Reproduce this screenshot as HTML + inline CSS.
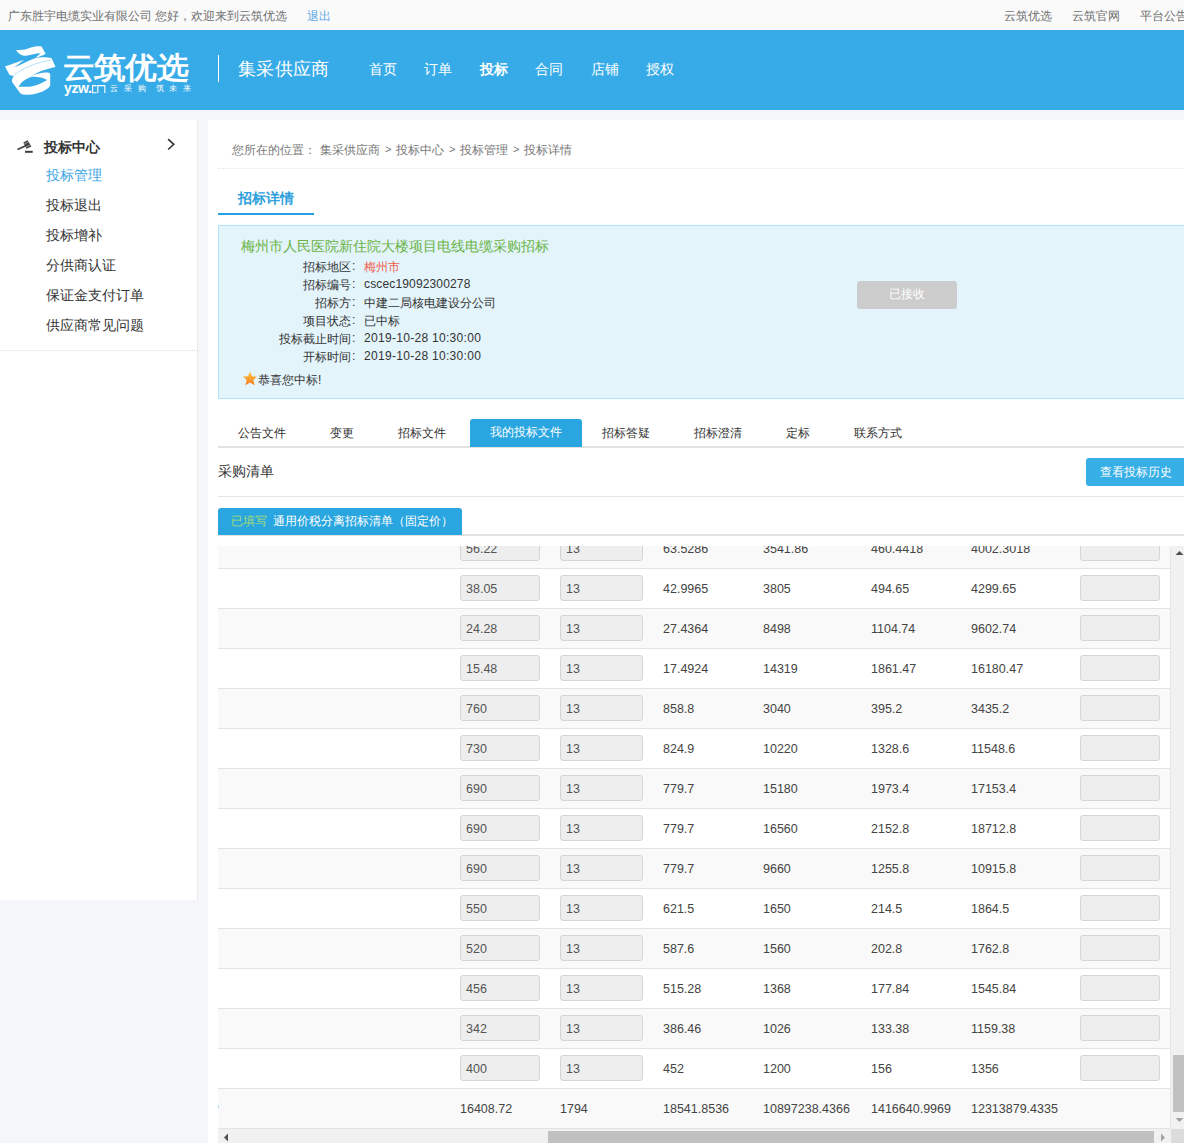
<!DOCTYPE html>
<html><head><meta charset="utf-8">
<style>
*{box-sizing:border-box;margin:0;padding:0}
html,body{width:1184px;height:1143px;overflow:hidden}
body{background:#f4f6fa;font-family:"Liberation Sans",sans-serif;color:#333;position:relative}
.abs{position:absolute;white-space:nowrap}
#top{position:absolute;left:0;top:0;width:1184px;height:30px;background:#fafafa;font-size:12px;color:#707070}
#hdr{position:absolute;left:0;top:30px;width:1184px;height:80px;background:#37abe8;color:#fff}
#side{position:absolute;left:0;top:120px;width:198px;height:780px;background:#fff;border-right:1px solid #ececec}
#main{position:absolute;left:208px;top:120px;width:1000px;height:1100px;background:#fff}
.nav{font-size:14px;color:#fff;top:31px}
.si{font-size:14px;color:#333;left:46px}
.lbl{font-size:12px;color:#333;text-align:right;width:132px;left:0}
.val{font-size:12px;color:#333;left:145px}
.bc{font-size:12px;color:#777;top:22px}
.gt{font-size:11px;top:23px}
.tab{font-size:12px;color:#333;top:16px}
.row{position:absolute;left:0;width:952px;height:40px;border-top:1px solid #e3e3e3}
.g{background:#f9f9f9}
.inp{position:absolute;top:6px;height:26px;background:#eee;border:1px solid #d5d5d5;border-radius:3px;font-size:12.5px;color:#555;padding-left:5px;line-height:26px}
.c{position:absolute;top:1px;line-height:39px;font-size:12.5px;color:#444}
</style></head><body>

<div id="top">
  <div class="abs" style="left:8px;top:8px">广东胜宇电缆实业有限公司 您好，欢迎来到云筑优选</div>
  <div class="abs" style="left:307px;top:8px;color:#5aa8e6">退出</div>
  <div class="abs" style="left:1004px;top:8px">云筑优选</div>
  <div class="abs" style="left:1072px;top:8px">云筑官网</div>
  <div class="abs" style="left:1140px;top:8px">平台公告</div>
</div>

<div id="hdr">
  <svg class="abs" style="left:2px;top:12px" width="58" height="58" viewBox="0 0 58 58">
    <path fill="#fff" d="M14,7.9 C20,8.5 24,7.5 28,5.8 C32,4.4 36,3.6 39.6,4.6 L43.6,11.7 C41,13.5 37,14.8 33.5,15.8 L38.6,11.2 C34,11 30,13 24,13.7 C19,13.8 16,11 14,7.9Z"/>
    <path fill="#fff" fill-rule="evenodd" d="M3,24.4 L22.3,17.8 L12.2,25.6 C19,22.6 26,18.6 33.5,15.9 C40,14.8 46,15.5 49.7,16.2 L53.5,24.9 C44,27 35,29.5 28.9,35 C33,32 38,30.4 45.7,30.4 C47.5,30.5 48.2,31.5 48.2,33 L48.2,43.6 C46,48 36,52.5 26.4,52.8 C22,52.8 19.5,52.3 18.3,51.3 L10.1,40 C9.8,38 10.5,35.5 11.7,34 L7.6,33 Z M16.7,44.7 C19,40 23.5,37 28.9,35 C35,34.3 40,35.5 45.2,38 C40,41 34,44 27.9,44.7 Z"/>
    <path d="M12.2,33.5 C20,26 33,21 49.7,17.8" stroke="#37abe8" stroke-width="0.5" fill="none" opacity="0.7"/>
  </svg>
  <div class="abs" style="left:63px;top:17px;font-size:32px;font-weight:bold;letter-spacing:-0.8px;transform:scaleY(0.94);transform-origin:0 22px">云筑优选</div>
  <div class="abs" style="left:64px;top:50px;font-size:14px;line-height:16px;font-weight:bold;letter-spacing:-0.4px">yzw.</div>
  <svg class="abs" style="left:91px;top:54px" width="16" height="10" viewBox="0 0 16 10"><path d="M5.6 1.6 H1.6 V8.8 H5.6 M6.8 9 V1.6 H13.8 V9" fill="none" stroke="#fff" stroke-width="1.1"/></svg>
  <div class="abs" style="left:110px;top:53px;font-size:8px;letter-spacing:5.9px">云采购</div>
  <div class="abs" style="left:155.5px;top:53px;font-size:8px;letter-spacing:5.9px">筑未来</div>
  <div class="abs" style="left:218px;top:25px;width:1px;height:27px;background:#fff"></div>
  <div class="abs" style="left:238px;top:27px;font-size:18px;letter-spacing:0.3px">集采供应商</div>
  <div class="abs nav" style="left:369px">首页</div>
  <div class="abs nav" style="left:424px">订单</div>
  <div class="abs nav" style="left:480px;font-weight:bold">投标</div>
  <div class="abs nav" style="left:535px">合同</div>
  <div class="abs nav" style="left:591px">店铺</div>
  <div class="abs nav" style="left:646px">授权</div>
</div>

<div id="side">
  <svg class="abs" style="left:14px;top:16px" width="24" height="20" viewBox="0 0 24 20">
    <path d="M4.1 13.2 L11.6 9.8" stroke="#404040" stroke-width="1.7" stroke-linecap="round"/>
    <path d="M9.3 6.4 L13.6 4.2 L17.4 10.4 L12.5 12.8Z" fill="#404040"/>
    <path d="M10.3 8 L14.7 5.7 M11.9 11.1 L16.4 8.8" stroke="#fff" stroke-width="0.6" opacity="0.8"/>
    <rect x="11" y="14.8" width="7.7" height="2" fill="#404040"/>
  </svg>
  <div class="abs" style="left:44px;top:19px;font-size:14px;font-weight:bold;color:#333">投标中心</div>
  <svg class="abs" style="left:166px;top:18px" width="10" height="14" viewBox="0 0 10 14"><path d="M2.1 1.1 L7.8 6.3 L2.1 11.5" fill="none" stroke="#333" stroke-width="1.6"/></svg>
  <div class="abs si" style="top:47px;color:#3aa5e4">投标管理</div>
  <div class="abs si" style="top:77px">投标退出</div>
  <div class="abs si" style="top:107px">投标增补</div>
  <div class="abs si" style="top:137px">分供商认证</div>
  <div class="abs si" style="top:167px">保证金支付订单</div>
  <div class="abs si" style="top:197px">供应商常见问题</div>
  <div class="abs" style="left:0;top:230px;width:197px;border-top:1px dotted #ddd"></div>
</div>

<div id="main">
  <div class="abs bc" style="left:24px">您所在的位置：</div>
  <div class="abs bc" style="left:112px">集采供应商</div>
  <div class="abs bc gt" style="left:177px">&gt;</div>
  <div class="abs bc" style="left:188px">投标中心</div>
  <div class="abs bc gt" style="left:241px">&gt;</div>
  <div class="abs bc" style="left:252px">投标管理</div>
  <div class="abs bc gt" style="left:305px">&gt;</div>
  <div class="abs bc" style="left:316px">投标详情</div>
  <div class="abs" style="left:10px;top:48px;width:990px;border-top:1px dotted #e6e6e6"></div>
  <div class="abs" style="left:30px;top:70px;font-size:14px;font-weight:bold;color:#2f9fdc">招标详情</div>
  <div class="abs" style="left:10px;top:93px;width:96px;height:2px;background:#22a2e2"></div>

  <div class="abs" style="left:10px;top:105px;width:990px;height:174px;background:#e3f4fb;border:1px solid #b2e2f8">
    <div class="abs" style="left:22px;top:12px;font-size:14px;color:#6ab344">梅州市人民医院新住院大楼项目电线电缆采购招标</div>
    <div class="abs lbl" style="top:33px">招标地区</div><div class="abs" style="left:133px;top:33px;font-size:12px">:</div><div class="abs val" style="top:33px"><span style="color:#f0604d">梅州市</span></div>
    <div class="abs lbl" style="top:51px">招标编号</div><div class="abs" style="left:133px;top:51px;font-size:12px">:</div><div class="abs val" style="top:51px;letter-spacing:0.15px">cscec19092300278</div>
    <div class="abs lbl" style="top:69px">招标方</div><div class="abs" style="left:133px;top:69px;font-size:12px">:</div><div class="abs val" style="top:69px">中建二局核电建设分公司</div>
    <div class="abs lbl" style="top:87px">项目状态</div><div class="abs" style="left:133px;top:87px;font-size:12px">:</div><div class="abs val" style="top:87px">已中标</div>
    <div class="abs lbl" style="top:105px">投标截止时间</div><div class="abs" style="left:133px;top:105px;font-size:12px">:</div><div class="abs val" style="top:105px;letter-spacing:0.3px">2019-10-28 10:30:00</div>
    <div class="abs lbl" style="top:123px">开标时间</div><div class="abs" style="left:133px;top:123px;font-size:12px">:</div><div class="abs val" style="top:123px;letter-spacing:0.3px">2019-10-28 10:30:00</div>
    <svg class="abs" style="left:23px;top:145px" width="16" height="16" viewBox="0 0 16 16"><defs><linearGradient id="sg" x1="0" y1="0" x2="0" y2="1"><stop offset="0" stop-color="#fcc94a"/><stop offset="1" stop-color="#f7791a"/></linearGradient></defs><path d="M8 0.5 L10 5.3 L15 5.6 L11.3 8.9 L12.5 14.2 L8 11.5 L3.5 14.2 L4.7 8.9 L1 5.6 L6 5.3Z" fill="url(#sg)"/></svg>
    <div class="abs" style="left:39px;top:146px;font-size:12px;color:#333">恭喜您中标!</div>
    <div class="abs" style="left:638px;top:55px;width:100px;height:28px;background:#ccc;border-radius:3px;color:#fff;font-size:12px;text-align:center;line-height:26px">已接收</div>
  </div>

  <!-- tabs -->
  <div class="abs" style="left:10px;top:326px;width:990px;border-top:2px solid #e2e2e2"></div>
  <div class="abs tab" style="left:30px;top:305px">公告文件</div>
  <div class="abs tab" style="left:122px;top:305px">变更</div>
  <div class="abs tab" style="left:190px;top:305px">招标文件</div>
  <div class="abs" style="left:262px;top:299px;width:112px;height:28px;background:#29a6e0;border-radius:3px 3px 0 0;color:#fff;font-size:12px;text-align:center;line-height:26px">我的投标文件</div>
  <div class="abs tab" style="left:394px;top:305px">招标答疑</div>
  <div class="abs tab" style="left:486px;top:305px">招标澄清</div>
  <div class="abs tab" style="left:578px;top:305px">定标</div>
  <div class="abs tab" style="left:646px;top:305px">联系方式</div>

  <div class="abs" style="left:10px;top:343px;font-size:14px;color:#333">采购清单</div>
  <div class="abs" style="left:878px;top:338px;width:110px;height:28px;background:#36aee6;border-radius:3px;color:#fff;font-size:12px;line-height:28px;padding-left:14px">查看投标历史</div>
  <div class="abs" style="left:10px;top:376px;width:990px;border-top:1px solid #e5e5e5"></div>

  <div class="abs" style="left:10px;top:414px;width:990px;border-top:2px solid #e2e2e2"></div>
  <div class="abs" style="left:10px;top:388px;width:244px;height:27px;background:#29a6e0;border-radius:3px 3px 0 0;font-size:12px;line-height:27px;padding-left:13px;color:#fff"><span style="color:#a6dc72;margin-right:6px">已填写</span>通用价税分离招标清单（固定价）</div>
</div>

<div id="tbl" style="position:absolute;left:218px;top:546px;width:952px;height:582px;overflow:hidden;background:#fff">
<div class="row g" style="top:-18px"><div class="inp" style="left:242px;width:80px">56.22</div><div class="inp" style="left:342px;width:83px">13</div><div class="c" style="left:445px">63.5286</div><div class="c" style="left:545px">3541.86</div><div class="c" style="left:653px">460.4418</div><div class="c" style="left:753px">4002.3018</div><div class="inp" style="left:862px;width:80px"></div></div>
<div class="row" style="top:22px"><div class="inp" style="left:242px;width:80px">38.05</div><div class="inp" style="left:342px;width:83px">13</div><div class="c" style="left:445px">42.9965</div><div class="c" style="left:545px">3805</div><div class="c" style="left:653px">494.65</div><div class="c" style="left:753px">4299.65</div><div class="inp" style="left:862px;width:80px"></div></div>
<div class="row g" style="top:62px"><div class="inp" style="left:242px;width:80px">24.28</div><div class="inp" style="left:342px;width:83px">13</div><div class="c" style="left:445px">27.4364</div><div class="c" style="left:545px">8498</div><div class="c" style="left:653px">1104.74</div><div class="c" style="left:753px">9602.74</div><div class="inp" style="left:862px;width:80px"></div></div>
<div class="row" style="top:102px"><div class="inp" style="left:242px;width:80px">15.48</div><div class="inp" style="left:342px;width:83px">13</div><div class="c" style="left:445px">17.4924</div><div class="c" style="left:545px">14319</div><div class="c" style="left:653px">1861.47</div><div class="c" style="left:753px">16180.47</div><div class="inp" style="left:862px;width:80px"></div></div>
<div class="row g" style="top:142px"><div class="inp" style="left:242px;width:80px">760</div><div class="inp" style="left:342px;width:83px">13</div><div class="c" style="left:445px">858.8</div><div class="c" style="left:545px">3040</div><div class="c" style="left:653px">395.2</div><div class="c" style="left:753px">3435.2</div><div class="inp" style="left:862px;width:80px"></div></div>
<div class="row" style="top:182px"><div class="inp" style="left:242px;width:80px">730</div><div class="inp" style="left:342px;width:83px">13</div><div class="c" style="left:445px">824.9</div><div class="c" style="left:545px">10220</div><div class="c" style="left:653px">1328.6</div><div class="c" style="left:753px">11548.6</div><div class="inp" style="left:862px;width:80px"></div></div>
<div class="row g" style="top:222px"><div class="inp" style="left:242px;width:80px">690</div><div class="inp" style="left:342px;width:83px">13</div><div class="c" style="left:445px">779.7</div><div class="c" style="left:545px">15180</div><div class="c" style="left:653px">1973.4</div><div class="c" style="left:753px">17153.4</div><div class="inp" style="left:862px;width:80px"></div></div>
<div class="row" style="top:262px"><div class="inp" style="left:242px;width:80px">690</div><div class="inp" style="left:342px;width:83px">13</div><div class="c" style="left:445px">779.7</div><div class="c" style="left:545px">16560</div><div class="c" style="left:653px">2152.8</div><div class="c" style="left:753px">18712.8</div><div class="inp" style="left:862px;width:80px"></div></div>
<div class="row g" style="top:302px"><div class="inp" style="left:242px;width:80px">690</div><div class="inp" style="left:342px;width:83px">13</div><div class="c" style="left:445px">779.7</div><div class="c" style="left:545px">9660</div><div class="c" style="left:653px">1255.8</div><div class="c" style="left:753px">10915.8</div><div class="inp" style="left:862px;width:80px"></div></div>
<div class="row" style="top:342px"><div class="inp" style="left:242px;width:80px">550</div><div class="inp" style="left:342px;width:83px">13</div><div class="c" style="left:445px">621.5</div><div class="c" style="left:545px">1650</div><div class="c" style="left:653px">214.5</div><div class="c" style="left:753px">1864.5</div><div class="inp" style="left:862px;width:80px"></div></div>
<div class="row g" style="top:382px"><div class="inp" style="left:242px;width:80px">520</div><div class="inp" style="left:342px;width:83px">13</div><div class="c" style="left:445px">587.6</div><div class="c" style="left:545px">1560</div><div class="c" style="left:653px">202.8</div><div class="c" style="left:753px">1762.8</div><div class="inp" style="left:862px;width:80px"></div></div>
<div class="row" style="top:422px"><div class="inp" style="left:242px;width:80px">456</div><div class="inp" style="left:342px;width:83px">13</div><div class="c" style="left:445px">515.28</div><div class="c" style="left:545px">1368</div><div class="c" style="left:653px">177.84</div><div class="c" style="left:753px">1545.84</div><div class="inp" style="left:862px;width:80px"></div></div>
<div class="row g" style="top:462px"><div class="inp" style="left:242px;width:80px">342</div><div class="inp" style="left:342px;width:83px">13</div><div class="c" style="left:445px">386.46</div><div class="c" style="left:545px">1026</div><div class="c" style="left:653px">133.38</div><div class="c" style="left:753px">1159.38</div><div class="inp" style="left:862px;width:80px"></div></div>
<div class="row" style="top:502px"><div class="inp" style="left:242px;width:80px">400</div><div class="inp" style="left:342px;width:83px">13</div><div class="c" style="left:445px">452</div><div class="c" style="left:545px">1200</div><div class="c" style="left:653px">156</div><div class="c" style="left:753px">1356</div><div class="inp" style="left:862px;width:80px"></div></div>
<div class="row g" style="top:542px"><div class="c" style="left:242px">16408.72</div><div class="c" style="left:342px">1794</div><div class="c" style="left:445px">18541.8536</div><div class="c" style="left:545px">10897238.4366</div><div class="c" style="left:653px">1416640.9969</div><div class="c" style="left:753px">12313879.4335</div></div>
</div><!--TBL_END-->
<!-- scrollbars -->
<div class="abs" style="left:218px;top:1105px;width:1px;height:3px;background:#b0dcf8"></div>
<div class="abs" style="left:218px;top:1128px;width:952px;height:1px;background:#e3e3e3"></div>
<div class="abs" style="left:1170px;top:546px;width:17px;height:583px;background:#f1f1f1;border-left:1px solid #e6e6e6"></div>
<div class="abs" style="left:1173px;top:1055px;width:12px;height:57px;background:#c1c1c1"></div>
<svg class="abs" style="left:1175px;top:550px" width="9" height="6" viewBox="0 0 9 6"><path d="M0.5 5 L4.5 1 L8.5 5Z" fill="#505050"/></svg>
<svg class="abs" style="left:1175px;top:1117px" width="9" height="6" viewBox="0 0 9 6"><path d="M0.5 1 L4.5 5 L8.5 1Z" fill="#a3a3a3"/></svg>
<div class="abs" style="left:218px;top:1129px;width:953px;height:17px;background:#f1f1f1"></div>
<div class="abs" style="left:548px;top:1131px;width:606px;height:12px;background:#c1c1c1"></div>
<svg class="abs" style="left:223px;top:1133px" width="6" height="9" viewBox="0 0 6 9"><path d="M5 0.5 L1 4.5 L5 8.5Z" fill="#505050"/></svg>
<svg class="abs" style="left:1160px;top:1133px" width="6" height="9" viewBox="0 0 6 9"><path d="M1 0.5 L5 4.5 L1 8.5Z" fill="#a3a3a3"/></svg>
<div class="abs" style="left:1171px;top:1129px;width:14px;height:15px;background:#dcdcdc"></div>


</body></html>
